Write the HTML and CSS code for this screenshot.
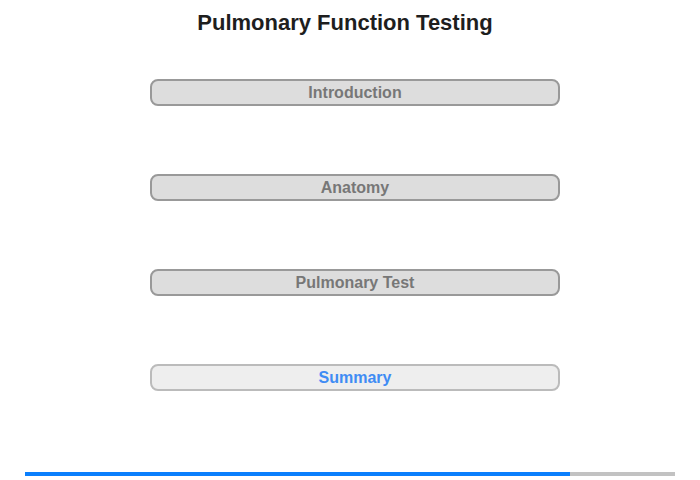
FILE: index.html
```html
<!DOCTYPE html>
<html lang="en">
<head>
    <meta charset="UTF-8">
    <title>Pulmonary Function Testing</title>
    <link rel="stylesheet" href="styles.css">
</head>
<body>
<div class="page">
    <h1 class="title">Pulmonary Function Testing</h1>

    <!-- 章节菜单 -->
    <div class="menu">
        <button class="menu-item">Introduction</button>
        <button class="menu-item">Anatomy</button>
        <button class="menu-item">Pulmonary Test</button>
        <button class="menu-item current">Summary</button>
    </div>

    <!-- 进度条 -->
    <div class="progress">
        <div class="progress-fill" style="width: 83.8%"></div>
    </div>
</div>
</body>
</html>
```

FILE: styles.css
```css
* {
    margin: 0;
    padding: 0;
    box-sizing: border-box;
}

body {
    font-family: "Liberation Sans", Arial, sans-serif;
    background-color: #ffffff;
    width: 700px;
    height: 480px;
    overflow: hidden;
}

.page {
    height: 480px;
    display: flex;
    flex-direction: column;
}

.title {
    font-size: 22px;
    font-weight: bold;
    color: #1e1e1e;
    text-align: center;
    padding-top: 10px;
    padding-right: 10px;
    line-height: 25px;
}

/* 菜单按钮 */
.menu {
    display: flex;
    flex-direction: column;
    gap: 68px;
    margin-top: 44px;
    padding-left: 150px;
}

.menu-item {
    width: 410px;
    height: 27px;
    font-family: inherit;
    font-size: 16px;
    font-weight: bold;
    color: #777777;
    background-color: #dddddd;
    border: 2px solid #999999;
    border-radius: 8px;
    cursor: pointer;
}

.menu-item.current {
    color: #3f8cf4;
    background-color: #eeeeee;
    border-color: #bbbbbb;
}

/* 进度条 */
.progress {
    margin: auto 25px 4px;
    height: 4px;
    background-color: #c2c2c2;
}

.progress-fill {
    height: 100%;
    background-color: #0a7ffd;
}
```
